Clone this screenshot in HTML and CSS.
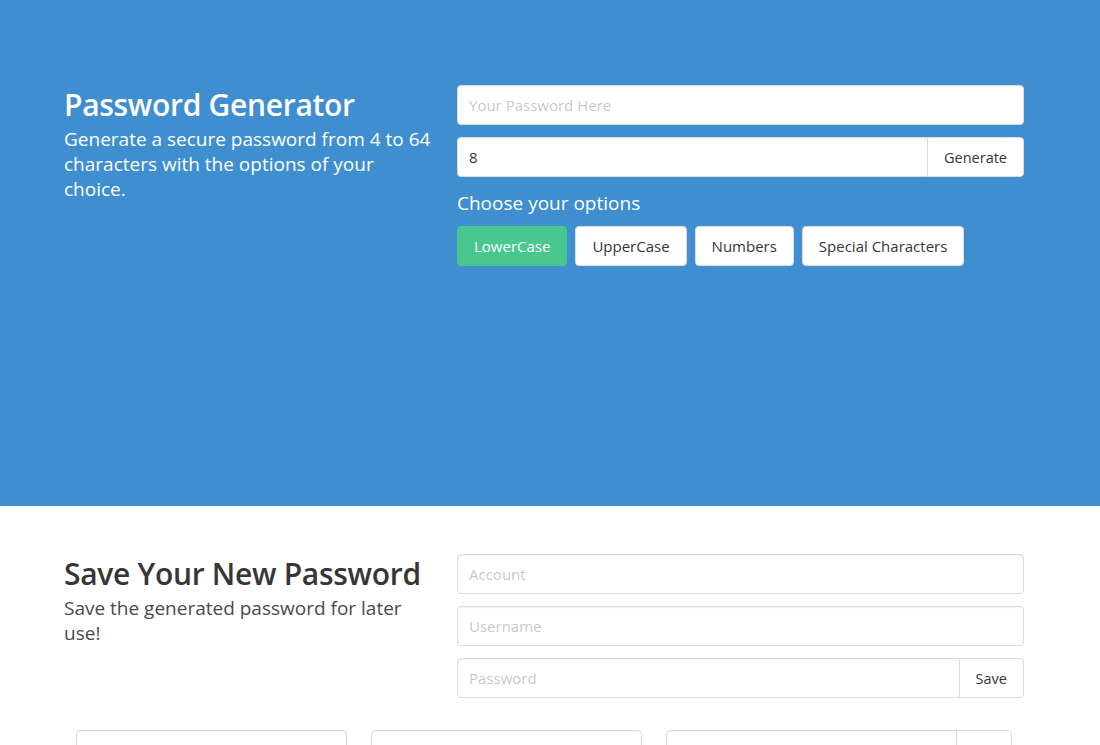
FILE: index.html
```html
<!DOCTYPE html>
<html lang="en">
<head>
<meta charset="utf-8">
<title>Password Generator</title>
<link rel="stylesheet" href="styles.css">
</head>
<body>
<section class="hero">
  <div class="container columns">
    <div class="intro">
      <h1 class="title">Password Generator</h1>
      <p class="subtitle">Generate a secure password from 4 to 64 characters with the options of your choice.</p>
    </div>
    <div class="form">
      <div class="field">
        <input class="input" type="text" placeholder="Your Password Here">
      </div>
      <div class="field addons">
        <input class="input" type="text" value="8">
        <button class="button addon">Generate</button>
      </div>
      <p class="options-label">Choose your options</p>
      <div class="buttons">
        <button class="button is-success">LowerCase</button>
        <button class="button">UpperCase</button>
        <button class="button">Numbers</button>
        <button class="button">Special Characters</button>
      </div>
    </div>
  </div>
</section>
<section class="save">
  <div class="container">
    <div class="columns">
      <div class="intro">
        <h2 class="title dark">Save Your New Password</h2>
        <p class="subtitle dark">Save the generated password for later use!</p>
      </div>
      <div class="form">
        <div class="field">
          <input class="input bordered" type="text" placeholder="Account">
        </div>
        <div class="field">
          <input class="input bordered" type="text" placeholder="Username">
        </div>
        <div class="field addons">
          <input class="input bordered" type="text" placeholder="Password">
          <button class="button addon bordered">Save</button>
        </div>
      </div>
    </div>
    <div class="entries">
      <input class="input bordered" type="text" value="Hotmail" readonly>
      <input class="input bordered" type="text" value="myemail@hotmail.com" readonly>
      <div class="addons">
        <input class="input bordered" type="text" value="aK7#fd2Q" readonly>
        <button class="button addon bordered">Del</button>
      </div>
    </div>
  </div>
</section>
</body>
</html>
```

FILE: styles.css
```css
* { box-sizing: border-box; }

html, body {
  margin: 0;
  padding: 0;
  background: #ffffff;
  font-family: "Open Sans", "Noto Sans", "DejaVu Sans", sans-serif;
  font-size: 16px;
  color: #4a4a4a;
}

.hero {
  background: #3e8ed0;
  height: 506px;
  padding-top: 85px;
}

.container {
  width: 960px;
  margin-left: 64px;
}

.columns {
  display: grid;
  grid-template-columns: 369px 1fr;
  column-gap: 24px;
}

.intro { padding-top: 2px; }

.title {
  margin: 0;
  font-size: 30px;
  line-height: 36px;
  font-weight: 600;
  color: #ffffff;
  letter-spacing: -0.3px;
}

.subtitle {
  margin: 4px 0 0;
  font-size: 19px;
  line-height: 25px;
  font-weight: 400;
  color: #ffffff;
}

.title.dark { color: #363636; }
.subtitle.dark { color: #4a4a4a; }

.field { margin-bottom: 12px; }
.form .field:last-child { margin-bottom: 0; }

.addons { display: flex; }

.input {
  display: block;
  width: 100%;
  height: 40px;
  padding: 0 11px;
  border: 1px solid #dbdbdb;
  border-radius: 4px;
  background: #ffffff;
  color: #363636;
  font-family: inherit;
  font-size: 15px;
  box-shadow: inset 0 1px 2px rgba(10, 10, 10, 0.05);
  outline: none;
}

.input::placeholder { color: rgba(54, 54, 54, 0.3); }

.addons .input {
  flex: 1;
  border-radius: 4px 0 0 4px;
}

.button {
  height: 40px;
  padding: 0 16px;
  border: 1px solid #dbdbdb;
  border-radius: 4px;
  background: #ffffff;
  color: #363636;
  font-family: inherit;
  font-size: 15px;
  cursor: pointer;
  white-space: nowrap;
}

.button.addon {
  border-radius: 0 4px 4px 0;
  margin-left: -1px;
  padding: 0 16px;
  font-size: 14.5px;
}

.button.is-success {
  background: #48c78e;
  border-color: transparent;
  color: #ffffff;
}

.options-label {
  margin: 0 0 10px;
  padding-top: 2px;
  font-size: 19px;
  line-height: 25px;
  color: #ffffff;
}

.buttons {
  display: flex;
  gap: 8px;
}

.save {
  padding-top: 48px;
}

.entries {
  display: grid;
  grid-template-columns: 271px 271px 1fr;
  column-gap: 24px;
  padding: 32px 12px 24px;
}
```
